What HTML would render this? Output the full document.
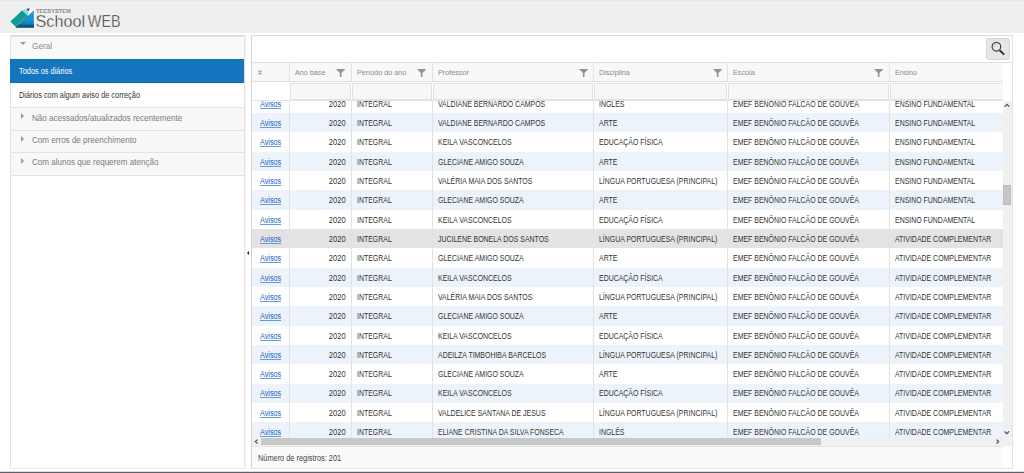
<!DOCTYPE html><html><head><meta charset="utf-8"><style>
*{box-sizing:border-box}
html,body{margin:0;padding:0;width:1024px;height:473px;overflow:hidden;background:#fff;
font-family:"Liberation Sans",sans-serif;}
.abs{position:absolute}
#hdr{left:0;top:0;width:1024px;height:33px;background:#efefef;border-top:1px solid #e6e6e6}
#bot{left:0;top:471px;width:1024px;height:2px;background:#5e5f67;border-top:1px solid #dcdcde}
.t{display:inline-block;transform:scaleX(0.83);transform-origin:0 50%;white-space:nowrap}
.tr{transform-origin:100% 50%}
#side{left:10px;top:35px;width:235px;height:434px;border:1px solid #e2e2e2;border-right-color:#e6e6e6;border-bottom-color:#e8e8e8;border-top:2px solid #dcdcdc;background:#fff;box-shadow:1px 0 0 #f3f3f3}
.si{position:absolute;left:0;width:233px;font-size:8.4px;}
.sh{background:#f8f8f8;color:#7a7a7a;border-bottom:1px solid #e3e3e3}
.tri-d{position:absolute;left:8.6px;width:0;height:0;border-left:3.3px solid transparent;border-right:3.3px solid transparent;border-top:3.8px solid #9a9a9a}
.tri-r{position:absolute;left:10px;width:0;height:0;border-top:3px solid transparent;border-bottom:3px solid transparent;border-left:3.5px solid #9a9a9a}
#grid{left:251px;top:35px;width:762px;height:434px;border:1px solid #e2e2e2;border-left-color:#d6d6d6;border-top:1px solid #dcdcdc;background:#fff}
.cell{position:absolute;font-size:8.4px;line-height:19px;color:#333;overflow:hidden;white-space:nowrap}
.hc{position:absolute;top:62px;height:20px;background:#f8f8f8;border-left:1px solid #e2e2e2;border-top:1px solid #e0e0e0;border-bottom:1px solid #e0e0e0;font-size:7.6px;line-height:18px;color:#8a8a8a;overflow:hidden}
.fc{position:absolute;top:82px;height:19px;background:#fff;border-bottom:1px solid #e3e3e3;overflow:hidden}
.fi{position:absolute;left:1px;right:0;top:1px;height:16.5px;background:#f7f7f7;border:1px solid #e1e1e1}
.row{position:absolute;left:252px;width:751px;height:19.34px}
.vl{position:absolute;width:1px;background:#e2e2e2}
.lk{color:#1d5fbf;text-decoration:underline;text-decoration-color:#6b9ad8}
</style></head><body>
<div id="hdr" class="abs"></div>
<svg class="abs" style="left:0;top:0" width="130" height="33" viewBox="0 0 130 33">
<defs><linearGradient id="bg1" x1="0" y1="0" x2="0" y2="1"><stop offset="0" stop-color="#1ba0e6"/><stop offset="0.55" stop-color="#1590d6"/><stop offset="1" stop-color="#1372b8"/></linearGradient>
<linearGradient id="bg2" x1="0" y1="0" x2="0" y2="1"><stop offset="0" stop-color="#1585cc" stop-opacity="0"/><stop offset="0.5" stop-color="#1a4f86"/><stop offset="1" stop-color="#0f3a66"/></linearGradient></defs>
<polygon points="9.3,21.5 22.2,9.3 29.8,7.3 34.8,9.6 34.8,28.4 15.3,28.4" fill="#fff" opacity="0.7"/>
<polygon points="33.9,10.3 33.9,27.6 15.6,27.6" fill="url(#bg1)"/>
<polygon points="19.0,24.2 33.9,22.8 33.9,27.6 15.6,27.6" fill="url(#bg2)"/>
<polygon points="17.4,25.8 33.9,26.8 33.9,27.6 15.6,27.6" fill="#0b6a6e"/>
<polygon points="10.3,21.5 22.2,10.3 27.8,15.4 15.6,26.8" fill="#0e9c98"/>
<line x1="16.2" y1="27.2" x2="28.2" y2="15.8" stroke="#23484c" stroke-width="0.7"/>
<polygon points="22.2,10.3 26.2,9.1 28.8,11.1 27.8,15.4" fill="#96d8f4"/>
<polygon points="26.2,9.1 29.5,8.3 28.8,11.1" fill="#0b3a40"/>
<text x="35.9" y="12.9" font-family="Liberation Sans" font-weight="bold" font-size="4.8" fill="#606060" stroke="#efefef" stroke-width="0.15" textLength="35" lengthAdjust="spacingAndGlyphs">TECSYSTEM</text>
<text x="35.6" y="26.7" font-family="Liberation Sans" font-size="17.2" fill="#222" stroke="#efefef" stroke-width="0.45" textLength="49.4" lengthAdjust="spacingAndGlyphs">School</text>
<text x="87.8" y="26.7" font-family="Liberation Sans" font-size="17.2" fill="#222" stroke="#efefef" stroke-width="0.45" textLength="32.8" lengthAdjust="spacingAndGlyphs">WEB</text>
</svg>
<div id="side" class="abs">
<div class="si" style="top:0;height:22px;background:#f9f9f9;color:#8a8a8a;line-height:18px"><div class="tri-d" style="top:5px"></div><span style="position:absolute;left:21px"><span class="t" style="transform:scaleX(0.98)">Geral</span></span></div>
<div class="si" style="top:22px;left:-1px;width:234px;height:24px;background:#1576c0;border-top:1px solid #0f6cb5;border-bottom:1px solid #1069b0;color:#fff;line-height:22px"><span style="position:absolute;left:9px"><span class="t" style="transform:scaleX(0.88)">Todos os diários</span></span></div>
<div class="si" style="top:46px;height:25px;background:#fff;color:#333;line-height:24px;border-bottom:1px solid #e3e3e3"><span style="position:absolute;left:8px"><span class="t" style="transform:scaleX(0.878)">Diários com algum aviso de correção</span></span></div>
<div class="si sh" style="top:71px;height:23px;line-height:20px"><div class="tri-r" style="top:5px"></div><span style="position:absolute;left:21px"><span class="t" style="transform:scaleX(0.963)">Não acessados/atualizados recentemente</span></span></div>
<div class="si sh" style="top:94px;height:22px;line-height:18.5px"><div class="tri-r" style="top:5px"></div><span style="position:absolute;left:21px"><span class="t" style="transform:scaleX(0.963)">Com erros de preenchimento</span></span></div>
<div class="si sh" style="top:116px;height:23px;line-height:18.5px"><div class="tri-r" style="top:5px"></div><span style="position:absolute;left:21px"><span class="t" style="transform:scaleX(0.963)">Com alunos que requerem atenção</span></span></div>
</div>
<div id="grid" class="abs"></div>
<div class="abs" style="left:986px;top:38px;width:24px;height:22px;background:#e6e6e6;border:1px solid #d6d6d6;border-radius:3px"></div>
<svg class="abs" style="left:986px;top:38px" width="24" height="22" viewBox="0 0 24 22"><circle cx="10.4" cy="8.8" r="4.3" fill="none" stroke="#333" stroke-width="1.1"/><path d="M8.2,8.6 A2.6,2.6 0 0 1 10.2,6.4" fill="none" stroke="#aaa" stroke-width="0.6"/><line x1="13.6" y1="12.2" x2="18.2" y2="16.6" stroke="#333" stroke-width="1.9"/></svg>
<div class="abs" style="left:252px;top:100px;width:751px;height:337.5px;overflow:hidden">
<div class="row" style="left:0;top:-6.45px;background:#fff"></div>
<div class="row" style="left:0;top:12.89px;background:#edf3fa"></div>
<div class="row" style="left:0;top:32.23px;background:#fff"></div>
<div class="row" style="left:0;top:51.57px;background:#edf3fa"></div>
<div class="row" style="left:0;top:70.91px;background:#fff"></div>
<div class="row" style="left:0;top:90.25px;background:#edf3fa"></div>
<div class="row" style="left:0;top:109.59px;background:#fff"></div>
<div class="row" style="left:0;top:128.93px;background:#e3e3e3"></div>
<div class="row" style="left:0;top:148.27px;background:#fff"></div>
<div class="row" style="left:0;top:167.61px;background:#edf3fa"></div>
<div class="row" style="left:0;top:186.95px;background:#fff"></div>
<div class="row" style="left:0;top:206.29px;background:#edf3fa"></div>
<div class="row" style="left:0;top:225.63px;background:#fff"></div>
<div class="row" style="left:0;top:244.97px;background:#edf3fa"></div>
<div class="row" style="left:0;top:264.31px;background:#fff"></div>
<div class="row" style="left:0;top:283.65px;background:#edf3fa"></div>
<div class="row" style="left:0;top:302.99px;background:#fff"></div>
<div class="row" style="left:0;top:322.33px;background:#edf3fa"></div>
<div class="cell" style="top:-5px;left:7.5px;width:29.5px"><span class="t lk" style="transform:scaleX(0.86)">Avisos</span></div>
<div class="cell" style="top:-5px;left:37px;width:62px;text-align:right;padding-right:5px"><span class="t tr" style="transform:scaleX(0.9)">2020</span></div>
<div class="cell" style="top:-5px;left:105px;width:75px"><span class="t">INTEGRAL</span></div>
<div class="cell" style="top:-5px;left:186px;width:155px"><span class="t">VALDIANE BERNARDO CAMPOS</span></div>
<div class="cell" style="top:-5px;left:347px;width:128px"><span class="t">INGLES</span></div>
<div class="cell" style="top:-5px;left:481px;width:156px"><span class="t">EMEF BENONIO FALCAO DE GOUVEA</span></div>
<div class="cell" style="top:-5px;left:643px;width:108px"><span class="t">ENSINO FUNDAMENTAL</span></div>
<div class="cell" style="top:14px;left:7.5px;width:29.5px"><span class="t lk" style="transform:scaleX(0.86)">Avisos</span></div>
<div class="cell" style="top:14px;left:37px;width:62px;text-align:right;padding-right:5px"><span class="t tr" style="transform:scaleX(0.9)">2020</span></div>
<div class="cell" style="top:14px;left:105px;width:75px"><span class="t">INTEGRAL</span></div>
<div class="cell" style="top:14px;left:186px;width:155px"><span class="t">VALDIANE BERNARDO CAMPOS</span></div>
<div class="cell" style="top:14px;left:347px;width:128px"><span class="t">ARTE</span></div>
<div class="cell" style="top:14px;left:481px;width:156px"><span class="t">EMEF BENÔNIO FALCÃO DE GOUVÊA</span></div>
<div class="cell" style="top:14px;left:643px;width:108px"><span class="t">ENSINO FUNDAMENTAL</span></div>
<div class="cell" style="top:33px;left:7.5px;width:29.5px"><span class="t lk" style="transform:scaleX(0.86)">Avisos</span></div>
<div class="cell" style="top:33px;left:37px;width:62px;text-align:right;padding-right:5px"><span class="t tr" style="transform:scaleX(0.9)">2020</span></div>
<div class="cell" style="top:33px;left:105px;width:75px"><span class="t">INTEGRAL</span></div>
<div class="cell" style="top:33px;left:186px;width:155px"><span class="t">KEILA VASCONCELOS</span></div>
<div class="cell" style="top:33px;left:347px;width:128px"><span class="t">EDUCAÇÃO FÍSICA</span></div>
<div class="cell" style="top:33px;left:481px;width:156px"><span class="t">EMEF BENÔNIO FALCÃO DE GOUVÊA</span></div>
<div class="cell" style="top:33px;left:643px;width:108px"><span class="t">ENSINO FUNDAMENTAL</span></div>
<div class="cell" style="top:53px;left:7.5px;width:29.5px"><span class="t lk" style="transform:scaleX(0.86)">Avisos</span></div>
<div class="cell" style="top:53px;left:37px;width:62px;text-align:right;padding-right:5px"><span class="t tr" style="transform:scaleX(0.9)">2020</span></div>
<div class="cell" style="top:53px;left:105px;width:75px"><span class="t">INTEGRAL</span></div>
<div class="cell" style="top:53px;left:186px;width:155px"><span class="t">GLECIANE AMIGO SOUZA</span></div>
<div class="cell" style="top:53px;left:347px;width:128px"><span class="t">ARTE</span></div>
<div class="cell" style="top:53px;left:481px;width:156px"><span class="t">EMEF BENÔNIO FALCÃO DE GOUVÊA</span></div>
<div class="cell" style="top:53px;left:643px;width:108px"><span class="t">ENSINO FUNDAMENTAL</span></div>
<div class="cell" style="top:72px;left:7.5px;width:29.5px"><span class="t lk" style="transform:scaleX(0.86)">Avisos</span></div>
<div class="cell" style="top:72px;left:37px;width:62px;text-align:right;padding-right:5px"><span class="t tr" style="transform:scaleX(0.9)">2020</span></div>
<div class="cell" style="top:72px;left:105px;width:75px"><span class="t">INTEGRAL</span></div>
<div class="cell" style="top:72px;left:186px;width:155px"><span class="t">VALÉRIA MAIA DOS SANTOS</span></div>
<div class="cell" style="top:72px;left:347px;width:128px"><span class="t">LÍNGUA PORTUGUESA (PRINCIPAL)</span></div>
<div class="cell" style="top:72px;left:481px;width:156px"><span class="t">EMEF BENÔNIO FALCÃO DE GOUVÊA</span></div>
<div class="cell" style="top:72px;left:643px;width:108px"><span class="t">ENSINO FUNDAMENTAL</span></div>
<div class="cell" style="top:91px;left:7.5px;width:29.5px"><span class="t lk" style="transform:scaleX(0.86)">Avisos</span></div>
<div class="cell" style="top:91px;left:37px;width:62px;text-align:right;padding-right:5px"><span class="t tr" style="transform:scaleX(0.9)">2020</span></div>
<div class="cell" style="top:91px;left:105px;width:75px"><span class="t">INTEGRAL</span></div>
<div class="cell" style="top:91px;left:186px;width:155px"><span class="t">GLECIANE AMIGO SOUZA</span></div>
<div class="cell" style="top:91px;left:347px;width:128px"><span class="t">ARTE</span></div>
<div class="cell" style="top:91px;left:481px;width:156px"><span class="t">EMEF BENÔNIO FALCÃO DE GOUVÊA</span></div>
<div class="cell" style="top:91px;left:643px;width:108px"><span class="t">ENSINO FUNDAMENTAL</span></div>
<div class="cell" style="top:111px;left:7.5px;width:29.5px"><span class="t lk" style="transform:scaleX(0.86)">Avisos</span></div>
<div class="cell" style="top:111px;left:37px;width:62px;text-align:right;padding-right:5px"><span class="t tr" style="transform:scaleX(0.9)">2020</span></div>
<div class="cell" style="top:111px;left:105px;width:75px"><span class="t">INTEGRAL</span></div>
<div class="cell" style="top:111px;left:186px;width:155px"><span class="t">KEILA VASCONCELOS</span></div>
<div class="cell" style="top:111px;left:347px;width:128px"><span class="t">EDUCAÇÃO FÍSICA</span></div>
<div class="cell" style="top:111px;left:481px;width:156px"><span class="t">EMEF BENÔNIO FALCÃO DE GOUVÊA</span></div>
<div class="cell" style="top:111px;left:643px;width:108px"><span class="t">ENSINO FUNDAMENTAL</span></div>
<div class="cell" style="top:130px;left:7.5px;width:29.5px"><span class="t lk" style="transform:scaleX(0.86)">Avisos</span></div>
<div class="cell" style="top:130px;left:37px;width:62px;text-align:right;padding-right:5px"><span class="t tr" style="transform:scaleX(0.9)">2020</span></div>
<div class="cell" style="top:130px;left:105px;width:75px"><span class="t">INTEGRAL</span></div>
<div class="cell" style="top:130px;left:186px;width:155px"><span class="t">JUCILENE BONELA DOS SANTOS</span></div>
<div class="cell" style="top:130px;left:347px;width:128px"><span class="t">LÍNGUA PORTUGUESA (PRINCIPAL)</span></div>
<div class="cell" style="top:130px;left:481px;width:156px"><span class="t">EMEF BENÔNIO FALCÃO DE GOUVÊA</span></div>
<div class="cell" style="top:130px;left:643px;width:108px"><span class="t">ATIVIDADE COMPLEMENTAR</span></div>
<div class="cell" style="top:149px;left:7.5px;width:29.5px"><span class="t lk" style="transform:scaleX(0.86)">Avisos</span></div>
<div class="cell" style="top:149px;left:37px;width:62px;text-align:right;padding-right:5px"><span class="t tr" style="transform:scaleX(0.9)">2020</span></div>
<div class="cell" style="top:149px;left:105px;width:75px"><span class="t">INTEGRAL</span></div>
<div class="cell" style="top:149px;left:186px;width:155px"><span class="t">GLECIANE AMIGO SOUZA</span></div>
<div class="cell" style="top:149px;left:347px;width:128px"><span class="t">ARTE</span></div>
<div class="cell" style="top:149px;left:481px;width:156px"><span class="t">EMEF BENÔNIO FALCÃO DE GOUVÊA</span></div>
<div class="cell" style="top:149px;left:643px;width:108px"><span class="t">ATIVIDADE COMPLEMENTAR</span></div>
<div class="cell" style="top:169px;left:7.5px;width:29.5px"><span class="t lk" style="transform:scaleX(0.86)">Avisos</span></div>
<div class="cell" style="top:169px;left:37px;width:62px;text-align:right;padding-right:5px"><span class="t tr" style="transform:scaleX(0.9)">2020</span></div>
<div class="cell" style="top:169px;left:105px;width:75px"><span class="t">INTEGRAL</span></div>
<div class="cell" style="top:169px;left:186px;width:155px"><span class="t">KEILA VASCONCELOS</span></div>
<div class="cell" style="top:169px;left:347px;width:128px"><span class="t">EDUCAÇÃO FÍSICA</span></div>
<div class="cell" style="top:169px;left:481px;width:156px"><span class="t">EMEF BENÔNIO FALCÃO DE GOUVÊA</span></div>
<div class="cell" style="top:169px;left:643px;width:108px"><span class="t">ATIVIDADE COMPLEMENTAR</span></div>
<div class="cell" style="top:188px;left:7.5px;width:29.5px"><span class="t lk" style="transform:scaleX(0.86)">Avisos</span></div>
<div class="cell" style="top:188px;left:37px;width:62px;text-align:right;padding-right:5px"><span class="t tr" style="transform:scaleX(0.9)">2020</span></div>
<div class="cell" style="top:188px;left:105px;width:75px"><span class="t">INTEGRAL</span></div>
<div class="cell" style="top:188px;left:186px;width:155px"><span class="t">VALÉRIA MAIA DOS SANTOS</span></div>
<div class="cell" style="top:188px;left:347px;width:128px"><span class="t">LÍNGUA PORTUGUESA (PRINCIPAL)</span></div>
<div class="cell" style="top:188px;left:481px;width:156px"><span class="t">EMEF BENÔNIO FALCÃO DE GOUVÊA</span></div>
<div class="cell" style="top:188px;left:643px;width:108px"><span class="t">ATIVIDADE COMPLEMENTAR</span></div>
<div class="cell" style="top:207px;left:7.5px;width:29.5px"><span class="t lk" style="transform:scaleX(0.86)">Avisos</span></div>
<div class="cell" style="top:207px;left:37px;width:62px;text-align:right;padding-right:5px"><span class="t tr" style="transform:scaleX(0.9)">2020</span></div>
<div class="cell" style="top:207px;left:105px;width:75px"><span class="t">INTEGRAL</span></div>
<div class="cell" style="top:207px;left:186px;width:155px"><span class="t">GLECIANE AMIGO SOUZA</span></div>
<div class="cell" style="top:207px;left:347px;width:128px"><span class="t">ARTE</span></div>
<div class="cell" style="top:207px;left:481px;width:156px"><span class="t">EMEF BENÔNIO FALCÃO DE GOUVÊA</span></div>
<div class="cell" style="top:207px;left:643px;width:108px"><span class="t">ATIVIDADE COMPLEMENTAR</span></div>
<div class="cell" style="top:227px;left:7.5px;width:29.5px"><span class="t lk" style="transform:scaleX(0.86)">Avisos</span></div>
<div class="cell" style="top:227px;left:37px;width:62px;text-align:right;padding-right:5px"><span class="t tr" style="transform:scaleX(0.9)">2020</span></div>
<div class="cell" style="top:227px;left:105px;width:75px"><span class="t">INTEGRAL</span></div>
<div class="cell" style="top:227px;left:186px;width:155px"><span class="t">KEILA VASCONCELOS</span></div>
<div class="cell" style="top:227px;left:347px;width:128px"><span class="t">EDUCAÇÃO FÍSICA</span></div>
<div class="cell" style="top:227px;left:481px;width:156px"><span class="t">EMEF BENÔNIO FALCÃO DE GOUVÊA</span></div>
<div class="cell" style="top:227px;left:643px;width:108px"><span class="t">ATIVIDADE COMPLEMENTAR</span></div>
<div class="cell" style="top:246px;left:7.5px;width:29.5px"><span class="t lk" style="transform:scaleX(0.86)">Avisos</span></div>
<div class="cell" style="top:246px;left:37px;width:62px;text-align:right;padding-right:5px"><span class="t tr" style="transform:scaleX(0.9)">2020</span></div>
<div class="cell" style="top:246px;left:105px;width:75px"><span class="t">INTEGRAL</span></div>
<div class="cell" style="top:246px;left:186px;width:155px"><span class="t">ADEILZA TIMBOHIBA BARCELOS</span></div>
<div class="cell" style="top:246px;left:347px;width:128px"><span class="t">LÍNGUA PORTUGUESA (PRINCIPAL)</span></div>
<div class="cell" style="top:246px;left:481px;width:156px"><span class="t">EMEF BENÔNIO FALCÃO DE GOUVÊA</span></div>
<div class="cell" style="top:246px;left:643px;width:108px"><span class="t">ATIVIDADE COMPLEMENTAR</span></div>
<div class="cell" style="top:265px;left:7.5px;width:29.5px"><span class="t lk" style="transform:scaleX(0.86)">Avisos</span></div>
<div class="cell" style="top:265px;left:37px;width:62px;text-align:right;padding-right:5px"><span class="t tr" style="transform:scaleX(0.9)">2020</span></div>
<div class="cell" style="top:265px;left:105px;width:75px"><span class="t">INTEGRAL</span></div>
<div class="cell" style="top:265px;left:186px;width:155px"><span class="t">GLECIANE AMIGO SOUZA</span></div>
<div class="cell" style="top:265px;left:347px;width:128px"><span class="t">ARTE</span></div>
<div class="cell" style="top:265px;left:481px;width:156px"><span class="t">EMEF BENÔNIO FALCÃO DE GOUVÊA</span></div>
<div class="cell" style="top:265px;left:643px;width:108px"><span class="t">ATIVIDADE COMPLEMENTAR</span></div>
<div class="cell" style="top:284px;left:7.5px;width:29.5px"><span class="t lk" style="transform:scaleX(0.86)">Avisos</span></div>
<div class="cell" style="top:284px;left:37px;width:62px;text-align:right;padding-right:5px"><span class="t tr" style="transform:scaleX(0.9)">2020</span></div>
<div class="cell" style="top:284px;left:105px;width:75px"><span class="t">INTEGRAL</span></div>
<div class="cell" style="top:284px;left:186px;width:155px"><span class="t">KEILA VASCONCELOS</span></div>
<div class="cell" style="top:284px;left:347px;width:128px"><span class="t">EDUCAÇÃO FÍSICA</span></div>
<div class="cell" style="top:284px;left:481px;width:156px"><span class="t">EMEF BENÔNIO FALCÃO DE GOUVÊA</span></div>
<div class="cell" style="top:284px;left:643px;width:108px"><span class="t">ATIVIDADE COMPLEMENTAR</span></div>
<div class="cell" style="top:304px;left:7.5px;width:29.5px"><span class="t lk" style="transform:scaleX(0.86)">Avisos</span></div>
<div class="cell" style="top:304px;left:37px;width:62px;text-align:right;padding-right:5px"><span class="t tr" style="transform:scaleX(0.9)">2020</span></div>
<div class="cell" style="top:304px;left:105px;width:75px"><span class="t">INTEGRAL</span></div>
<div class="cell" style="top:304px;left:186px;width:155px"><span class="t">VALDELICE SANTANA DE JESUS</span></div>
<div class="cell" style="top:304px;left:347px;width:128px"><span class="t">LÍNGUA PORTUGUESA (PRINCIPAL)</span></div>
<div class="cell" style="top:304px;left:481px;width:156px"><span class="t">EMEF BENÔNIO FALCÃO DE GOUVÊA</span></div>
<div class="cell" style="top:304px;left:643px;width:108px"><span class="t">ATIVIDADE COMPLEMENTAR</span></div>
<div class="cell" style="top:323px;left:7.5px;width:29.5px"><span class="t lk" style="transform:scaleX(0.86)">Avisos</span></div>
<div class="cell" style="top:323px;left:37px;width:62px;text-align:right;padding-right:5px"><span class="t tr" style="transform:scaleX(0.9)">2020</span></div>
<div class="cell" style="top:323px;left:105px;width:75px"><span class="t">INTEGRAL</span></div>
<div class="cell" style="top:323px;left:186px;width:155px"><span class="t">ELIANE CRISTINA DA SILVA FONSECA</span></div>
<div class="cell" style="top:323px;left:347px;width:128px"><span class="t">INGLÊS</span></div>
<div class="cell" style="top:323px;left:481px;width:156px"><span class="t">EMEF BENÔNIO FALCÃO DE GOUVÊA</span></div>
<div class="cell" style="top:323px;left:643px;width:108px"><span class="t">ATIVIDADE COMPLEMENTAR</span></div>
<div class="vl" style="left:37px;top:0;height:337.5px"></div>
<div class="vl" style="left:99px;top:0;height:337.5px"></div>
<div class="vl" style="left:180px;top:0;height:337.5px"></div>
<div class="vl" style="left:341px;top:0;height:337.5px"></div>
<div class="vl" style="left:475px;top:0;height:337.5px"></div>
<div class="vl" style="left:637px;top:0;height:337.5px"></div>
</div>
<div class="hc" style="left:252px;width:37px;border-left:none;"><span style="position:absolute;left:6px;top:0.6px"><span style="font-size:7px">#</span></span></div>
<div class="fc" style="left:252px;width:37px;"></div>
<div class="hc" style="left:289px;width:62px;"><span style="position:absolute;left:5px;top:0.6px"><span class="t" style="transform:scaleX(0.95)">Ano base</span></span></div>
<div class="fc" style="left:289px;width:62px;"><div class=fi></div></div>
<div class="hc" style="left:351px;width:81px;"><span style="position:absolute;left:5px;top:0.6px"><span class="t" style="transform:scaleX(0.95)">Período do ano</span></span></div>
<div class="fc" style="left:351px;width:81px;"><div class=fi></div></div>
<div class="hc" style="left:432px;width:161px;"><span style="position:absolute;left:5px;top:0.6px"><span class="t" style="transform:scaleX(0.95)">Professor</span></span></div>
<div class="fc" style="left:432px;width:161px;"><div class=fi></div></div>
<div class="hc" style="left:593px;width:134px;"><span style="position:absolute;left:5px;top:0.6px"><span class="t" style="transform:scaleX(0.95)">Disciplina</span></span></div>
<div class="fc" style="left:593px;width:134px;"><div class=fi></div></div>
<div class="hc" style="left:727px;width:162px;"><span style="position:absolute;left:5px;top:0.6px"><span class="t" style="transform:scaleX(0.95)">Escola</span></span></div>
<div class="fc" style="left:727px;width:162px;"><div class=fi></div></div>
<div class="hc" style="left:889px;width:114px;"><span style="position:absolute;left:5px;top:0.6px"><span class="t" style="transform:scaleX(0.95)">Ensino</span></span></div>
<div class="fc" style="left:889px;width:114px;"><div class=fi style='right:-3px'></div></div>
<div class="abs" style="left:1003px;top:62px;width:9px;height:1px;background:#e0e0e0"></div>
<svg class="abs" style="left:336.4px;top:68.7px" width="9.4" height="8.4" viewBox="0 0 9.4 8.4"><polygon points="0,0 9.4,0 5.5,4.1 5.5,8.3 3.9,8.3 3.9,4.1" fill="#939393"/></svg>
<svg class="abs" style="left:416.9px;top:68.7px" width="9.4" height="8.4" viewBox="0 0 9.4 8.4"><polygon points="0,0 9.4,0 5.5,4.1 5.5,8.3 3.9,8.3 3.9,4.1" fill="#939393"/></svg>
<svg class="abs" style="left:578.6px;top:68.7px" width="9.4" height="8.4" viewBox="0 0 9.4 8.4"><polygon points="0,0 9.4,0 5.5,4.1 5.5,8.3 3.9,8.3 3.9,4.1" fill="#939393"/></svg>
<svg class="abs" style="left:712.9px;top:68.7px" width="9.4" height="8.4" viewBox="0 0 9.4 8.4"><polygon points="0,0 9.4,0 5.5,4.1 5.5,8.3 3.9,8.3 3.9,4.1" fill="#939393"/></svg>
<svg class="abs" style="left:874.3px;top:68.7px" width="9.4" height="8.4" viewBox="0 0 9.4 8.4"><polygon points="0,0 9.4,0 5.5,4.1 5.5,8.3 3.9,8.3 3.9,4.1" fill="#939393"/></svg>
<div class="abs" style="left:1003px;top:101px;width:9px;height:345px;background:#f0f0f0"></div>
<div class="abs" style="left:1003px;top:185px;width:7.5px;height:20px;background:#c6c6c6;border:1px solid #bdbdbd"></div>
<div class="abs" style="left:252px;top:437.5px;width:751px;height:8.5px;background:#f0f0f0"></div>
<div class="abs" style="left:261px;top:438px;width:560px;height:7px;background:#c8c8c8"></div>
<svg class="abs" style="left:1003px;top:101px" width="9" height="9" viewBox="0 0 9 9"><polyline points="1.7,5.6 4.0,3.3 6.3,5.6" fill="none" stroke="#4a4a4a" stroke-width="1.2"/></svg>
<svg class="abs" style="left:1003px;top:428px" width="9" height="9" viewBox="0 0 9 9"><polyline points="1.5,3.3 3.8,5.6 6.1,3.3" fill="none" stroke="#4a4a4a" stroke-width="1.2"/></svg>
<svg class="abs" style="left:252px;top:437px" width="9" height="9" viewBox="0 0 9 9"><polyline points="5.5,2.6 3.3,4.6 5.5,6.6" fill="none" stroke="#4a4a4a" stroke-width="1.15"/></svg>
<svg class="abs" style="left:993px;top:437px" width="9" height="9" viewBox="0 0 9 9"><polyline points="3.5,2.6 5.7,4.6 3.5,6.6" fill="none" stroke="#4a4a4a" stroke-width="1.15"/></svg>
<div class="abs" style="left:252px;top:446px;width:751px;height:22px;background:#fafafa;border-top:1px solid #e3e3e3;font-size:8.4px;line-height:21px;color:#444"><span style="position:absolute;left:5.5px;top:1.2px"><span class="t" style="transform:scaleX(0.88)">Número de registros: 201</span></span></div>
<div class="abs" style="left:246.8px;top:250.8px;width:0;height:0;border-top:2px solid transparent;border-bottom:2px solid transparent;border-right:2.5px solid #222"></div>
<div id="bot" class="abs"></div>
</body></html>
